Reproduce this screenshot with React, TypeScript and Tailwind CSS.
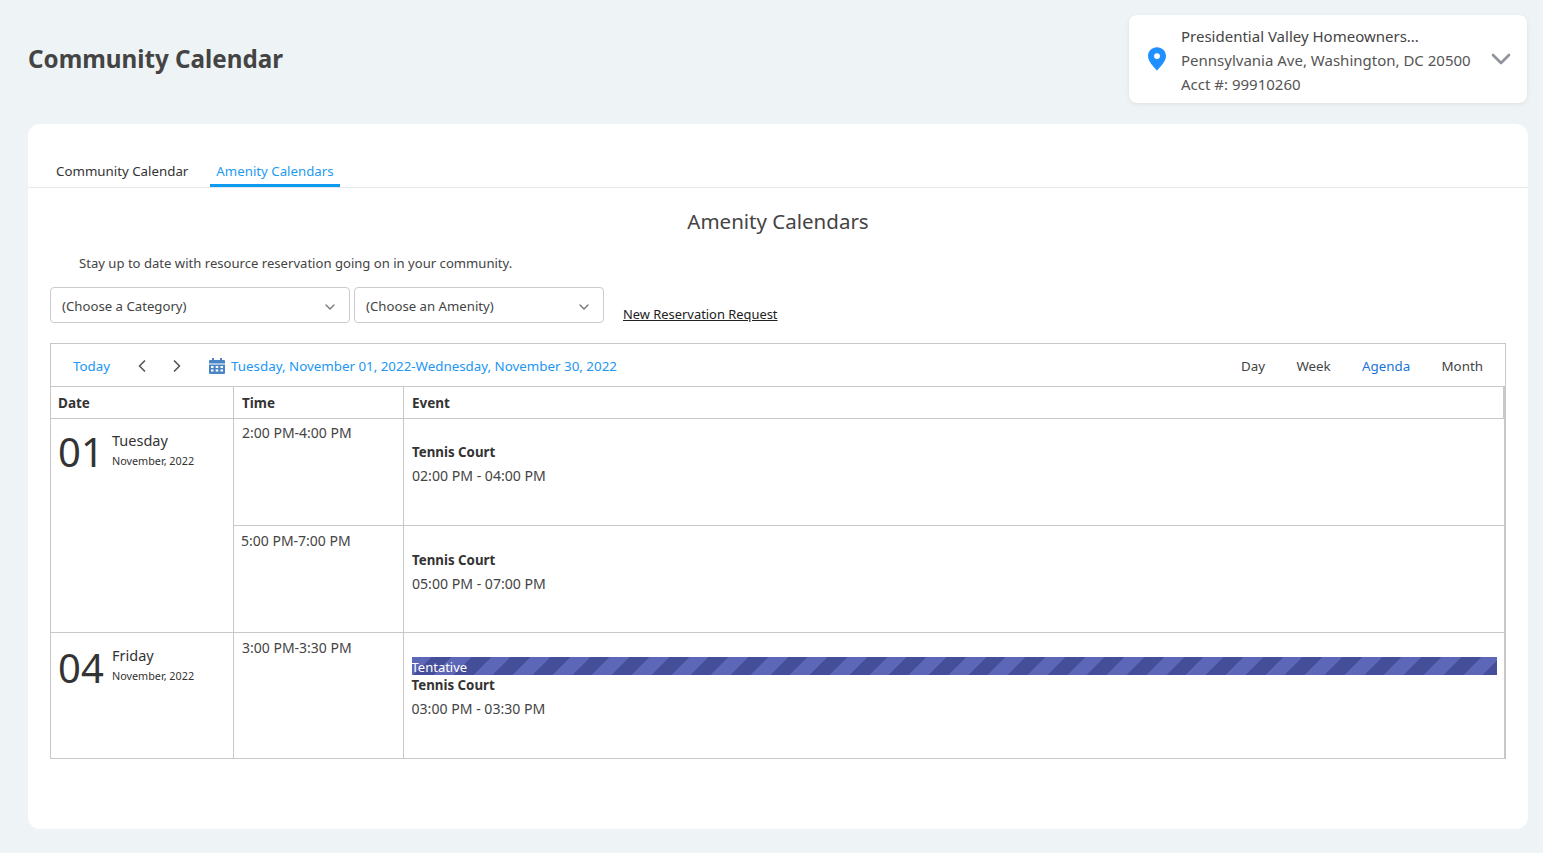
import { ChevronDown, ChevronLeft, ChevronRight } from 'lucide-react';

const font = "font-['Noto_Sans','Open_Sans',sans-serif]";

function DateCell({ day, name, second }: { day: string; name: string; second?: boolean }) {
  return (
    <div className={`flex items-start pl-[7px] ${second ? 'pt-[11px]' : 'pt-[9px]'}`}>
      <span className="w-[54px] text-[40px] leading-[48px] text-[#333]">{day}</span>
      <div className={second ? 'pt-[1px]' : 'pt-[2px]'}>
        <div className="text-[14.5px] leading-[20px] text-[#333]">{name}</div>
        <div className="mt-[4px] text-[10.8px] leading-[14px] text-[#333]">November, 2022</div>
      </div>
    </div>
  );
}

function EventCell({ time, tentative, lower }: { time: string; tentative?: boolean; lower?: boolean }) {
  return (
    <div className={tentative ? 'pl-[8px] pr-[7px] pt-[24px]' : lower ? 'pl-[8.5px] pr-2 pt-[24px]' : 'pl-[8.5px] pr-2 pt-[23px]'}>
      {tentative && (
        <div className="h-[18px] overflow-hidden bg-[repeating-linear-gradient(135deg,#5c67b8_0px,#5c67b8_14px,#454f99_14px,#454f99_28px)] text-[13px] leading-[20px] text-white">
          Tentative
        </div>
      )}
      <div className="text-[13.3px] font-bold leading-[20px] text-[#333]">Tennis Court</div>
      <div className="mt-[4px] text-[14.1px] leading-[20px] text-[#444]">{time}</div>
    </div>
  );
}

function CalendarIcon() {
  return (
    <svg viewBox="0 0 16 16" className="ml-[22px] h-[16px] w-[16px] shrink-0">
      <path
        fill="#4a86c5"
        fillRule="evenodd"
        d="M3 0h2v2h6V0h2v2h2a1 1 0 0 1 1 1v2.500H0V3a1 1 0 0 1 1-1h2V0ZM0 6.500h16V15a1 1 0 0 1-1 1H1a1 1 0 0 1-1-1V6.500Zm2 1.500v2h2.500V8H2Zm4.700 0v2h2.600V8H6.700Zm4.800 0v2H14V8h-2.500ZM2 11.500v2h2.500v-2H2Zm4.700 0v2h2.600v-2H6.700Zm4.800 0v2H14v-2h-2.500Z"
      />
    </svg>
  );
}

export default function App() {
  return (
    <div className={`h-[853px] overflow-hidden bg-[#eef3f6] ${font}`}>
      <header className="flex h-[124px] items-start justify-between pl-[28px] pr-[16px] pt-[15px]">
        <h1 className="mt-[27px] text-[24.2px] font-bold leading-[34px] text-[#444]">Community Calendar</h1>
        <div className="flex h-[88px] w-[398px] items-center rounded-lg bg-white pl-[19px] pr-[10px] shadow-[0_1px_4px_rgba(0,0,0,0.08)]">
          <svg viewBox="0 0 20 26" className="h-[24px] w-[18px] shrink-0">
            <path
              fill="#1e90ff"
              fillRule="evenodd"
              d="M10 0C4.500 0 0 4.300 0 9.800 0 16 7 22.500 10 26c3-3.500 10-10 10-16.200C20 4.300 15.500 0 10 0Zm0 6.500a3.300 3.300 0 1 1 0 6.600 3.300 3.300 0 0 1 0-6.600Z"
            />
          </svg>
          <div className="ml-[15px] flex-1 pt-[2px] text-[15px] leading-[24px] text-[#555]">
            <div className="text-[#444]">Presidential Valley Homeowners...</div>
            <div>Pennsylvania Ave, Washington, DC 20500</div>
            <div>Acct #: 99910260</div>
          </div>
          <ChevronDown className="h-[32px] w-[32px] text-[#8f939b]" strokeWidth={2} />
        </div>
      </header>

      <main className="ml-[28px] mr-[15px] h-[705px] rounded-xl bg-white pt-[36px]">
        <nav className="flex h-[28px] border-b border-[#e5e7eb] pl-[22px]">
          <div className="h-[28px] px-[6px] text-[13.3px] leading-[23px] text-[#333]">Community Calendar</div>
          <div className="ml-[16px] h-[27px] border-b-[3px] border-[#0d9bf2] px-[6px] text-[13.25px] leading-[23px] text-[#1e9bf0]">
            Amenity Calendars
          </div>
        </nav>

        <h2 className="mt-[17px] text-center text-[20.5px] leading-[32px] text-[#444]">Amenity Calendars</h2>
        <p className="mt-[16px] pl-[51px] text-[13.1px] leading-[20px] text-[#444]">
          Stay up to date with resource reservation going on in your community.
        </p>

        <div className="mt-[14px] flex items-start pl-[22px]">
          <div className="flex h-[36px] w-[300px] items-center justify-between rounded border border-[#ccc] px-[11px] pt-[4px] text-[13.2px] text-[#444]">
            (Choose a Category)
            <ChevronDown className="h-[16px] w-[16px] text-[#777]" />
          </div>
          <div className="ml-[4px] flex h-[36px] w-[250px] items-center justify-between rounded border border-[#ccc] px-[11px] pt-[4px] text-[13.2px] text-[#444]">
            (Choose an Amenity)
            <ChevronDown className="h-[16px] w-[16px] text-[#777]" />
          </div>
          <a className="ml-[19px] mt-[17px] text-[12.9px] leading-[20px] text-[#222] underline">New Reservation Request</a>
        </div>

        <section className="ml-[22px] mt-[19px] w-[1456px] border border-[#c8c8c8]">
          <div className="flex h-[43px] items-center justify-between border-b border-[#c8c8c8] px-[22px] pt-[2px] text-[13.35px]">
            <div className="flex items-center">
              <span className="text-[#2196f3]">Today</span>
              <ChevronLeft className="ml-[22px] h-[20px] w-[20px] text-[#555]" />
              <ChevronRight className="ml-[15px] h-[20px] w-[20px] text-[#555]" />
              <CalendarIcon />
              <span className="ml-[6px] text-[#2196f3]">Tuesday, November 01, 2022-Wednesday, November 30, 2022</span>
            </div>
            <div className="flex gap-[31.3px] text-[#444]">
              <span>Day</span>
              <span>Week</span>
              <span className="text-[#1a73d8]">Agenda</span>
              <span>Month</span>
            </div>
          </div>

          <table className="w-full table-fixed border-collapse text-left">
            <colgroup>
              <col className="w-[182px]" />
              <col className="w-[170px]" />
              <col />
            </colgroup>
            <thead>
              <tr className="h-[31px] border-b border-[#c8c8c8] text-[13.5px] font-bold text-[#333]">
                <th className="border-r border-[#c8c8c8] pl-[7px] pt-[2px]">Date</th>
                <th className="border-r border-[#c8c8c8] pl-[8.5px] pt-[2px]">Time</th>
                <th className="border-r-2 border-[#c8c8c8] pl-[8.5px] pt-[2px]">Event</th>
              </tr>
            </thead>
            <tbody>
              <tr className="h-[107px] border-b border-[#c8c8c8]">
                <td rowSpan={2} className="border-b border-r border-[#c8c8c8] align-top">
                  <DateCell day="01" name="Tuesday" />
                </td>
                <td className="border-r border-[#c8c8c8] pl-[8.5px] pt-[4px] align-top text-sm leading-[20px] text-[#444]">
                  2:00 PM-4:00 PM
                </td>
                <td className="border-r border-[#c8c8c8] align-top">
                  <EventCell time="02:00 PM - 04:00 PM" />
                </td>
              </tr>
              <tr className="h-[107px] border-b border-[#c8c8c8]">
                <td className="border-r border-[#c8c8c8] pl-[7.5px] pt-[5px] align-top text-sm leading-[20px] text-[#444]">
                  5:00 PM-7:00 PM
                </td>
                <td className="border-r border-[#c8c8c8] align-top">
                  <EventCell time="05:00 PM - 07:00 PM" lower />
                </td>
              </tr>
              <tr className="h-[126px]">
                <td className="border-r border-[#c8c8c8] align-top">
                  <DateCell day="04" name="Friday" second />
                </td>
                <td className="border-r border-[#c8c8c8] pl-[8.5px] pt-[5px] align-top text-sm leading-[20px] text-[#444]">
                  3:00 PM-3:30 PM
                </td>
                <td className="border-r border-[#c8c8c8] align-top">
                  <EventCell time="03:00 PM - 03:30 PM" tentative />
                </td>
              </tr>
            </tbody>
          </table>
        </section>
      </main>
    </div>
  );
}
